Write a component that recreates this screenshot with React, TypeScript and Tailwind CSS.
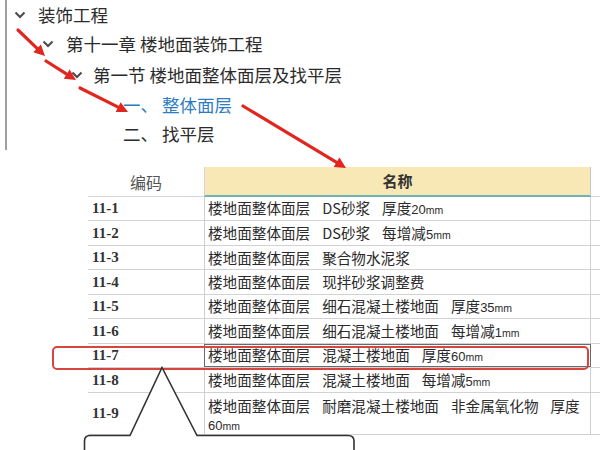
import React from "react";

const CJK = { fontFamily: '"Noto Sans CJK SC", "Noto Sans", sans-serif' };

function Chevron() {
  return (
    <svg width="12" height="8" viewBox="0 0 12 8" className="shrink-0">
      <polyline points="1.5,1.5 6,6 10.5,1.5" fill="none" stroke="#4a4a4a" strokeWidth="2" />
    </svg>
  );
}

type Row = { code: string; name: React.ReactNode; h: string; sel?: boolean };

const U = ({ n, u }: { n: string; u: string }) => (
  <span style={{ fontFamily: '"Liberation Sans", sans-serif' }} className="text-[13px]">
    {n}
    <span className="text-[10.5px]">{u}</span>
  </span>
);

const S = () => <span className="inline-block w-[12px]" />;

const rows: Row[] = [
  { code: "11-1", name: <>楼地面整体面层<S />DS砂浆<S />厚度<U n="20" u="mm" /></>, h: "h-[24px]" },
  { code: "11-2", name: <>楼地面整体面层<S />DS砂浆<S />每增减<U n="5" u="mm" /></>, h: "h-[25px]" },
  { code: "11-3", name: <>楼地面整体面层<S />聚合物水泥浆</>, h: "h-[24px]" },
  { code: "11-4", name: <>楼地面整体面层<S />现拌砂浆调整费</>, h: "h-[25px]" },
  { code: "11-5", name: <>楼地面整体面层<S />细石混凝土楼地面<S />厚度<U n="35" u="mm" /></>, h: "h-[24px]" },
  { code: "11-6", name: <>楼地面整体面层<S />细石混凝土楼地面<S />每增减<U n="1" u="mm" /></>, h: "h-[25px]" },
  { code: "11-7", name: <>楼地面整体面层<S />混凝土楼地面<S />厚度<U n="60" u="mm" /></>, h: "h-[24px]", sel: true },
  { code: "11-8", name: <>楼地面整体面层<S />混凝土楼地面<S />每增减<U n="5" u="mm" /></>, h: "h-[25px]" },
];

function Arrow({ x1, y1, x2, y2 }: { x1: number; y1: number; x2: number; y2: number }) {
  const dx = x2 - x1;
  const dy = y2 - y1;
  const len = Math.hypot(dx, dy);
  const ux = dx / len;
  const uy = dy / len;
  const hl = 11;
  const hw = 5.5;
  const bx = x2 - ux * hl;
  const by = y2 - uy * hl;
  const px = -uy * hw;
  const py = ux * hw;
  return (
    <g>
      <line x1={x1} y1={y1} x2={bx} y2={by} stroke="#e0261f" strokeWidth="3.2" strokeLinecap="round" />
      <polygon points={`${x2},${y2} ${bx + px},${by + py} ${bx - px},${by - py}`} fill="#e0261f" />
    </g>
  );
}

const codeFont = { fontFamily: '"Liberation Serif", serif' };

export default function App() {
  return (
    <div className="relative w-[600px] h-[450px] bg-white overflow-hidden text-[#2b2b2b]" style={CJK}>
      {/* Tree */}
      <div className="ml-[5px] h-[150px] border-l-2 border-[#a0a0a0] text-[17.5px] leading-none">
        <div className="flex items-center h-[29px] pl-[7px] gap-[12px]">
          <Chevron />
          <span>装饰工程</span>
        </div>
        <div className="flex items-center h-[30px] pl-[35px] gap-[12px]">
          <Chevron />
          <span>第十一章 楼地面装饰工程</span>
        </div>
        <div className="flex items-center h-[31px] pl-[64px] gap-[10px]">
          <Chevron />
          <span>第一节 楼地面整体面层及找平层</span>
        </div>
        <div className="flex items-center h-[30px] pl-[116px] text-[#2e7cc0]">
          <span>一、 整体面层</span>
        </div>
        <div className="flex items-center h-[27px] pl-[116px]">
          <span>二、 找平层</span>
        </div>
      </div>

      {/* Table */}
      <div className="ml-[88px] mt-[17px] w-[512px]">
        <div className="flex h-[30px]">
          <div className="w-[116px] flex items-center justify-center border-b border-[#d6d6d6] text-[16px] text-[#555]">
            编码
          </div>
          <div className="w-[387px] flex items-center justify-center bg-[#f8e8b5] border-b-2 border-[#6db3b8] border-l border-r border-l-[#d6d6d6] border-r-[#c8c8c8] text-[15px] font-bold text-[#333]">
            名称
          </div>
          <div className="flex-1 border-b border-[#d6d6d6]" />
        </div>
        {rows.map((r) => (
          <div key={r.code} className={`flex ${r.h} border-b border-[#d2d2d2]`}>
            <div className="w-[116px] flex items-center pl-[4px] text-[15px] font-bold text-[#333]" style={codeFont}>
              {r.code}
            </div>
            <div
              className={`w-[387px] flex items-center pl-[3px] text-[14.6px] whitespace-nowrap border-l border-r border-[#cfcfcf] ${
                r.sel ? "outline-1 outline-[#6a6a6a] -outline-offset-1" : ""
              }`}
            >
              <span>{r.name}</span>
            </div>
            <div className="flex-1" />
          </div>
        ))}
        <div className="flex h-[42px] border-b border-[#d2d2d2]">
          <div className="w-[116px] flex items-center pl-[4px] text-[15px] font-bold text-[#333]" style={codeFont}>
            11-9
          </div>
          <div className="w-[387px] pl-[3px] pt-[4px] text-[14.6px] leading-[18px] whitespace-nowrap border-l border-r border-[#cfcfcf]">
            楼地面整体面层<S />耐磨混凝土楼地面<S />非金属氧化物<S />厚度
            <br />
            <U n="60" u="mm" />
          </div>
          <div className="flex-1" />
        </div>
      </div>

      {/* Red highlight box */}
      <div className="absolute left-[52px] top-[346px] w-[537px] h-[24px] border-2 border-[#d8453c] rounded-[5px] pointer-events-none" />

      {/* Overlay drawings: arrows and callout */}
      <svg className="absolute left-0 top-0 pointer-events-none" width="600" height="450" viewBox="0 0 600 450">
        <Arrow x1={18} y1={30} x2={45} y2={56} />
        <Arrow x1={46} y1={61} x2={76} y2={80} />
        <Arrow x1={80} y1={88} x2={128} y2={112} />
        <Arrow x1={243} y1={106} x2={346} y2={168} />
        <path
          d="M84.5,452 L84.5,441 Q84.5,435.5 90,435.5 L130,435.5 L162,367.5 L197,435.5 L348,435.5 Q354,435.5 354,441 L354,452 Z"
          fill="white"
          stroke="#333"
          strokeWidth="1.6"
          strokeLinejoin="miter"
        />
      </svg>
    </div>
  );
}
